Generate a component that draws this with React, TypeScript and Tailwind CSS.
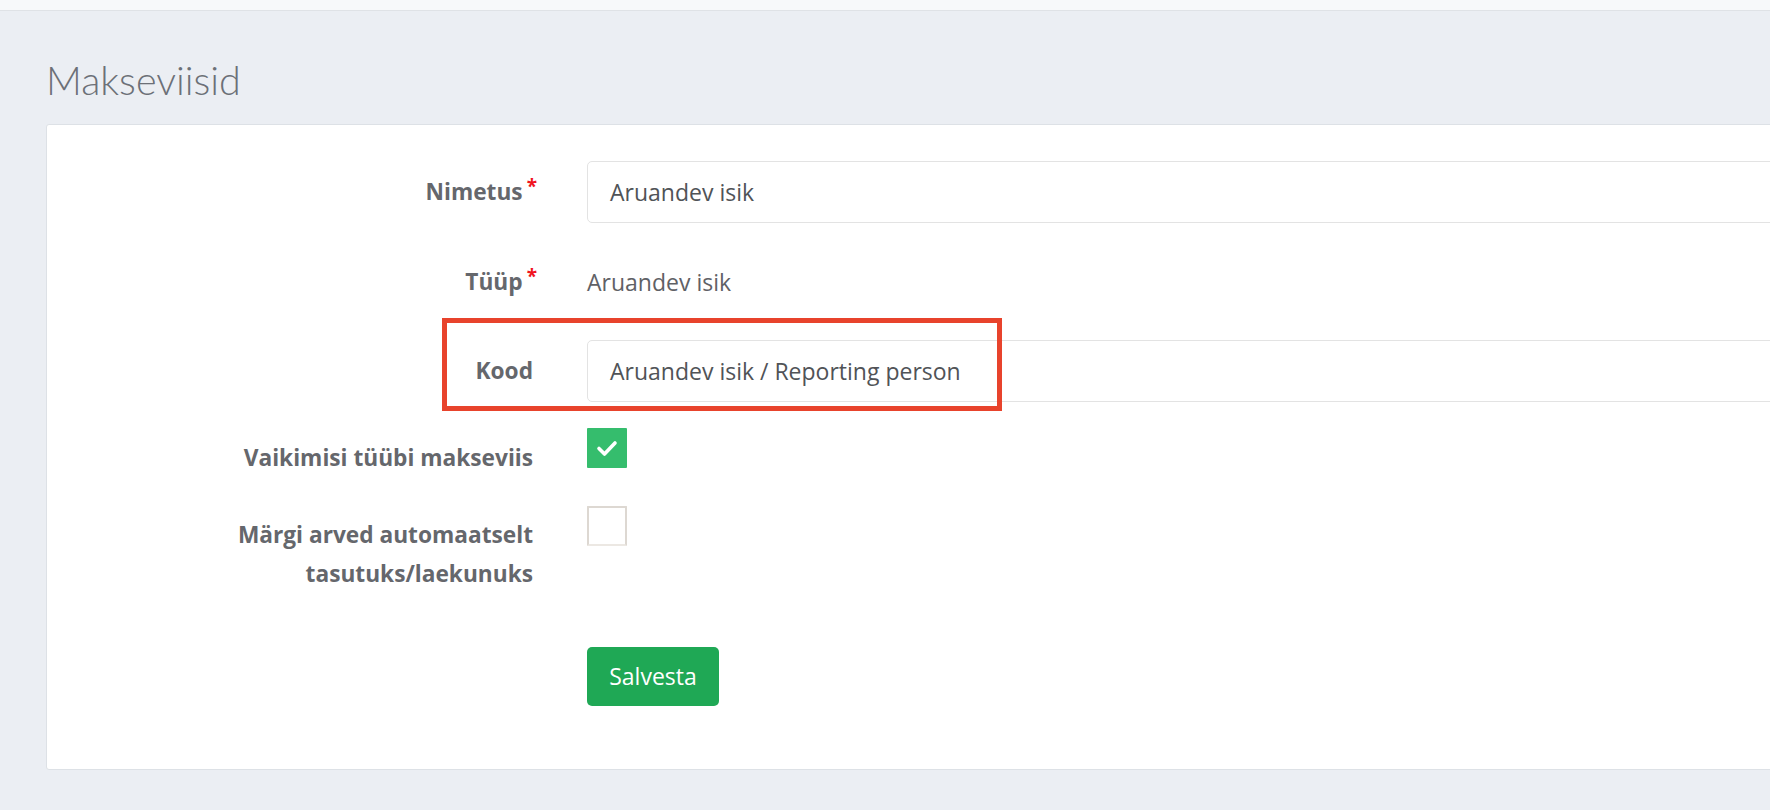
import React from "react";

const labelCls =
  "w-[486px] shrink-0 text-right font-bold text-[22.7px] leading-[39px] text-[#65676c]";

function Req() {
  return (
    <span className="relative -top-[7px] ml-[4px] -mr-[4px] text-[19px] font-bold text-[#f0141e]">*</span>
  );
}

function CheckBox({ checked }: { checked: boolean }) {
  if (checked) {
    return (
      <div className="flex h-[40px] w-[40px] items-center justify-center rounded-[1px] bg-[#35bd6d]">
        <svg width="40" height="40" viewBox="0 0 40 40" fill="none">
          <path
            d="M12 20.5 L17.5 26 L28 15"
            stroke="#ffffff"
            strokeWidth="3.6"
            strokeLinecap="round"
            strokeLinejoin="round"
          />
        </svg>
      </div>
    );
  }
  return (
    <div className="h-[40px] w-[40px] rounded-[1px] border-2 border-[#ddd8d2] border-b-[#ece8e3] bg-white" />
  );
}

export default function App() {
  return (
    <div className="min-h-[810px] w-full overflow-hidden bg-[#ebeef3] font-['Open_Sans',sans-serif]">
      <div className="h-[11px] border-b border-[#dfe2e6] bg-[#f7f9fa]" />

      <div className="pl-[46px]">
        <h1 className="mt-[44px] mb-[19px] font-['Lato',sans-serif] text-[39.5px] font-light leading-[50px] text-[#6c7077]">
          Makseviisid
        </h1>

        <div className="-mr-[80px] h-[646px] rounded-[3px] border border-[#dde1e6] bg-white pt-[36px] pr-[40px]">
          {/* Nimetus */}
          <div className="flex">
            <div className={`${labelCls} pt-[11px]`}>
              Nimetus
              <Req />
            </div>
            <div className="ml-[54px] flex h-[62px] flex-1 items-center rounded-[5px] border border-[#e3e3e3] pl-[22px] text-[23px] text-[#505357]">
              Aruandev isik
            </div>
          </div>

          {/* Tüüp */}
          <div className="mt-[28px] flex">
            <div className={`${labelCls} pt-[11px]`}>
              Tüüp
              <Req />
            </div>
            <div className="ml-[54px] flex h-[62px] flex-1 items-center text-[23px] text-[#5f6166]">
              Aruandev isik
            </div>
          </div>

          {/* Kood */}
          <div className="relative mt-[27px] flex">
            <div className={`${labelCls} pt-[11px]`}>Kood</div>
            <div className="ml-[54px] flex h-[62px] flex-1 items-center rounded-[5px] border border-[#e3e3e3] pl-[22px] text-[23px] text-[#505357]">
              Aruandev isik / Reporting person
            </div>
            <div className="pointer-events-none absolute -top-[22px] left-[395px] h-[93px] w-[560px] border-[5px] border-[#e8432c]" />
          </div>

          {/* Vaikimisi tüübi makseviis */}
          <div className="mt-[26px] flex">
            <div className={`${labelCls} pt-[10px]`}>Vaikimisi tüübi makseviis</div>
            <div className="ml-[54px] flex-1">
              <CheckBox checked />
            </div>
          </div>

          {/* Märgi arved automaatselt */}
          <div className="mt-[29px] flex">
            <div className={`${labelCls} pt-[9px]`}>
              Märgi arved automaatselt
              <br />
              tasutuks/laekunuks
            </div>
            <div className="ml-[54px] flex-1">
              <CheckBox checked={false} />
            </div>
          </div>

          {/* Salvesta */}
          <div className="mt-[54px] flex">
            <div className="w-[486px] shrink-0" />
            <div className="ml-[54px]">
              <button className="flex h-[59px] w-[132px] items-center justify-center rounded-[5px] bg-[#1fa855] text-[23px] text-white">
                Salvesta
              </button>
            </div>
          </div>
        </div>
      </div>
    </div>
  );
}
